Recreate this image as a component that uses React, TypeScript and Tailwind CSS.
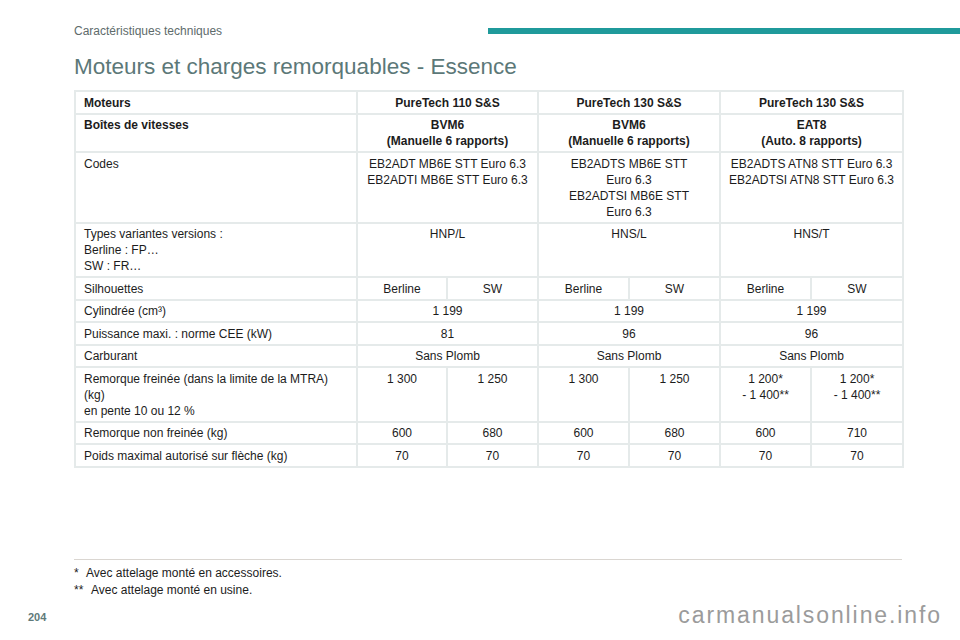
type Cell = { text: string[]; span?: number };
type Row = { label: string[]; cells: Cell[]; bold?: boolean };

const rows: Row[] = [
  {
    label: ["Moteurs"],
    bold: true,
    cells: [
      { text: ["PureTech 110 S&S"], span: 2 },
      { text: ["PureTech 130 S&S"], span: 2 },
      { text: ["PureTech 130 S&S"], span: 2 },
    ],
  },
  {
    label: ["Boîtes de vitesses"],
    bold: true,
    cells: [
      { text: ["BVM6", "(Manuelle 6 rapports)"], span: 2 },
      { text: ["BVM6", "(Manuelle 6 rapports)"], span: 2 },
      { text: ["EAT8", "(Auto. 8 rapports)"], span: 2 },
    ],
  },
  {
    label: ["Codes"],
    cells: [
      { text: ["EB2ADT MB6E STT Euro 6.3", "EB2ADTI MB6E STT Euro 6.3"], span: 2 },
      { text: ["EB2ADTS MB6E STT", "Euro 6.3", "EB2ADTSI MB6E STT", "Euro 6.3"], span: 2 },
      { text: ["EB2ADTS ATN8 STT Euro 6.3", "EB2ADTSI ATN8 STT Euro 6.3"], span: 2 },
    ],
  },
  {
    label: ["Types variantes versions :", "Berline : FP…", "SW : FR…"],
    cells: [
      { text: ["HNP/L"], span: 2 },
      { text: ["HNS/L"], span: 2 },
      { text: ["HNS/T"], span: 2 },
    ],
  },
  {
    label: ["Silhouettes"],
    cells: [
      { text: ["Berline"] },
      { text: ["SW"] },
      { text: ["Berline"] },
      { text: ["SW"] },
      { text: ["Berline"] },
      { text: ["SW"] },
    ],
  },
  {
    label: ["Cylindrée (cm³)"],
    cells: [
      { text: ["1 199"], span: 2 },
      { text: ["1 199"], span: 2 },
      { text: ["1 199"], span: 2 },
    ],
  },
  {
    label: ["Puissance maxi. : norme CEE (kW)"],
    cells: [
      { text: ["81"], span: 2 },
      { text: ["96"], span: 2 },
      { text: ["96"], span: 2 },
    ],
  },
  {
    label: ["Carburant"],
    cells: [
      { text: ["Sans Plomb"], span: 2 },
      { text: ["Sans Plomb"], span: 2 },
      { text: ["Sans Plomb"], span: 2 },
    ],
  },
  {
    label: ["Remorque freinée (dans la limite de la MTRA)", "(kg)", "en pente 10 ou 12 %"],
    cells: [
      { text: ["1 300"] },
      { text: ["1 250"] },
      { text: ["1 300"] },
      { text: ["1 250"] },
      { text: ["1 200*", "- 1 400**"] },
      { text: ["1 200*", "- 1 400**"] },
    ],
  },
  {
    label: ["Remorque non freinée (kg)"],
    cells: ["600", "680", "600", "680", "600", "710"].map((t) => ({ text: [t] })),
  },
  {
    label: ["Poids maximal autorisé sur flèche (kg)"],
    cells: ["70", "70", "70", "70", "70", "70"].map((t) => ({ text: [t] })),
  },
];

const Lines = ({ lines }: { lines: string[] }) => (
  <>
    {lines.map((l, i) => (
      <div key={i} className="whitespace-nowrap">
        {l}
      </div>
    ))}
  </>
);

export default function App() {
  return (
    <div className="relative w-[960px] h-[640px] bg-white font-['Liberation_Sans',Arial,sans-serif] text-[#1c1c1c] overflow-hidden">
      {/* en-tête */}
      <div className="flex items-center pt-[23px] h-[39px]">
        <div className="pl-[74px] text-[12px] leading-[16px] text-[#5e6b6b]">Caractéristiques techniques</div>
        <div className="ml-auto w-[472px] h-[6px] bg-[#1f9a9b]" />
      </div>

      <h1 className="mt-[15px] pl-[74px] text-[22.5px] leading-[26px] text-[#5c7878]">
        Moteurs et charges remorquables - Essence
      </h1>

      <div className="mt-[10px] pl-[74px]">
        <table className="table-fixed border-collapse w-[828px] text-[12px] leading-[16px]">
          <colgroup>
            <col className="w-[282px]" />
            <col className="w-[90px]" />
            <col className="w-[91px]" />
            <col className="w-[91px]" />
            <col className="w-[91px]" />
            <col className="w-[91px]" />
            <col className="w-[92px]" />
          </colgroup>
          <tbody>
            {rows.map((row, i) => (
              <tr key={i} className={row.bold ? "font-bold" : ""}>
                <td className="border-2 border-[#e5eaea] align-top text-left pl-[8px] pr-[4px] pt-[2.5px] pb-[2px]">
                  <Lines lines={row.label} />
                </td>
                {row.cells.map((c, j) => (
                  <td
                    key={j}
                    colSpan={c.span ?? 1}
                    className="border-2 border-[#e5eaea] align-top text-center px-[2px] pt-[2.5px] pb-[2px]"
                  >
                    <Lines lines={c.text} />
                  </td>
                ))}
              </tr>
            ))}
          </tbody>
        </table>
      </div>

      {/* notes */}
      <div className="mt-[91px] ml-[74px] w-[828px] border-t border-[#dad6d1] pt-[5px] text-[12px] leading-[17px] text-[#1c1c1c]">
        <div className="flex">
          <span className="w-[12px]">*</span>
          <span>Avec attelage monté en accessoires.</span>
        </div>
        <div className="flex">
          <span className="w-[17px]">**</span>
          <span>Avec attelage monté en usine.</span>
        </div>
      </div>

      <div className="mt-[11px] pl-[28px] text-[11px] leading-[14px] font-bold text-[#5f7a7a]">204</div>

      <div className="absolute right-[18px] top-[601px] text-[23px] leading-[28px] tracking-[1.9px] text-[#9b9b9b]">
        carmanualsonline.info
      </div>
    </div>
  );
}
